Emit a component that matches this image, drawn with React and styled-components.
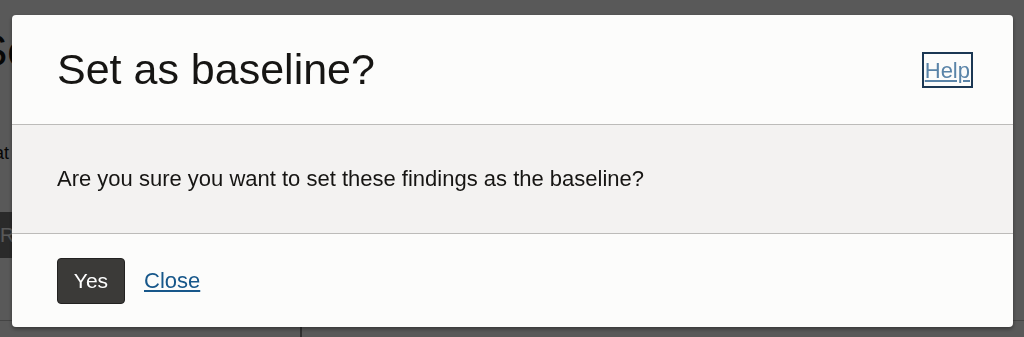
import React from 'react';
import styled, { createGlobalStyle } from 'styled-components';

const GlobalStyle = createGlobalStyle`
  body {
    margin: 0;
    background: #ffffff;
    font-family: "Liberation Sans", Arial, sans-serif;
  }
`;

const Page = styled.div`
  height: 337px;
  overflow: hidden;
  display: flex;
  flex-direction: column;
  color: #161513;
`;

const PageTitle = styled.h1`
  margin: 26px 0 0 -22px;
  font-size: 44px;
  font-weight: 400;
  white-space: nowrap;
`;

const PageText = styled.p`
  margin: 67px 0 0 -6px;
  font-size: 18px;
`;

const PageBar = styled.div`
  margin-top: 48px;
  height: 46px;
  width: 300px;
  background: #7a7a7a;
  color: #ffffff;
  font-size: 20px;
  display: flex;
  align-items: center;
`;

const PageBottom = styled.div`
  margin-top: auto;
  height: 16px;
  border-top: 1px solid #c4c4c4;
  display: grid;
  grid-template-columns: 302px 1fr;
  & > div:first-child {
    border-right: 2px solid #8a8a8a;
  }
`;

const Overlay = styled.div`
  position: fixed;
  inset: 0;
  background: rgba(0, 0, 0, 0.65);
  padding: 15px 11px 10px 12px;
  display: flex;
`;

const Dialog = styled.div`
  flex: 1;
  background: #fcfcfb;
  border-radius: 4px;
  box-shadow: 0 2px 4px rgba(0, 0, 0, 0.4);
  display: flex;
  flex-direction: column;
  overflow: hidden;
`;

const Header = styled.div`
  height: 110px;
  flex-shrink: 0;
  box-sizing: border-box;
  padding: 0 40px 0 45px;
  display: flex;
  align-items: center;
  justify-content: space-between;
  border-bottom: 1px solid #bcbbb9;
`;

const Title = styled.h2`
  margin: 0;
  font-size: 43px;
  font-weight: 400;
  color: #161513;
`;

const HelpLink = styled.a`
  font-size: 22px;
  color: #5a84a8;
  text-decoration: underline;
  border: 2px solid #1b3753;
  padding: 4px 1px 3px 1px;
  line-height: 25px;
`;

const Body = styled.div`
  height: 109px;
  flex-shrink: 0;
  box-sizing: border-box;
  padding: 0 45px;
  display: flex;
  align-items: center;
  background: #f3f2f1;
  border-bottom: 1px solid #bcbbb9;
  font-size: 22px;
  color: #161513;
`;

const Footer = styled.div`
  flex: 1;
  padding: 0 45px;
  display: flex;
  align-items: center;
  gap: 19px;
`;

const PrimaryButton = styled.button`
  width: 68px;
  height: 46px;
  padding: 0;
  background: #3b3a38;
  color: #ffffff;
  border: 1px solid #232221;
  border-radius: 4px;
  font-family: inherit;
  font-size: 21px;
`;

const TextLink = styled.a`
  font-size: 22px;
  color: #17578a;
  text-decoration: underline;
`;

const App = () => {
  return (
    <>
      <GlobalStyle />
      <Page>
        <PageTitle>Set as baseline</PageTitle>
        <PageText>at</PageText>
        <PageBar>R</PageBar>
        <PageBottom>
          <div />
          <div />
        </PageBottom>
      </Page>
      <Overlay>
        <Dialog>
          <Header>
            <Title>Set as baseline?</Title>
            <HelpLink href="#">Help</HelpLink>
          </Header>
          <Body>Are you sure you want to set these findings as the baseline?</Body>
          <Footer>
            <PrimaryButton>Yes</PrimaryButton>
            <TextLink href="#">Close</TextLink>
          </Footer>
        </Dialog>
      </Overlay>
    </>
  );
};

export default App;
